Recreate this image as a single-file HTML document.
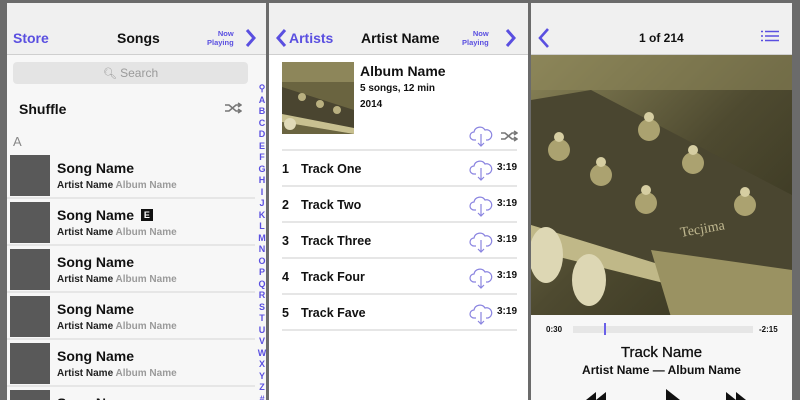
<!DOCTYPE html>
<html><head><meta charset="utf-8"><style>
*{margin:0;padding:0;box-sizing:border-box}
body{width:800px;height:400px;background:#6b6b6b;position:relative;overflow:hidden;font-family:"Liberation Sans",sans-serif;color:#111}
.p{position:absolute;top:3px;height:397px;background:#f7f7f7;overflow:hidden}
.nav{position:absolute;left:0;top:0;right:0;height:52px;background:#f0f0f0;border-bottom:1px solid #cfcfcf}
.a{position:absolute;font-weight:bold}
.blue{color:#5a4fe0}
.np{position:absolute;font-size:7.5px;font-weight:bold;color:#5a4fe0;text-align:right;line-height:9px}
.row{position:absolute;left:0;width:248px;height:47px;border-bottom:2px solid #e6e6e6}
.th{position:absolute;left:3px;top:3px;width:40px;height:41px;background:#595959}
.sn{position:absolute;left:50px;top:8px;font-size:14px;font-weight:bold;color:#111}
.sa{position:absolute;left:50px;top:28px;font-size:10px;font-weight:bold;color:#222}
.sa span{color:#9a9a9a}
.idx{position:absolute;left:249px;top:80px;width:12px;text-align:center;font-size:9px;font-weight:bold;color:#5a4fe0;line-height:11.5px}
.tr{position:absolute;left:13px;width:235px;height:36px;border-top:2px solid #e6e6e6;font-size:12.5px;font-weight:bold}
</style></head><body>
<div class="p" style="left:7px;width:259px">
 <div class="nav">
  <div class="a blue" style="left:6px;top:27px;font-size:14px">Store</div>
  <div class="a" style="left:110px;top:27px;font-size:14px">Songs</div>
  <div class="np" style="left:200px;top:26px">Now<br>Playing</div>
  <svg style="position:absolute;left:237px;top:25px" width="12" height="20"><path d="M3 2 L10 10 L3 18" stroke="#5a4fe0" stroke-width="3" fill="none"/></svg>
 </div>
 <div style="position:absolute;left:6px;top:59px;width:235px;height:22px;background:#e4e4e4;border-radius:4px;color:#9a9a9a;font-size:12px;text-align:center;line-height:22px"><span style="font-size:11px">&#x1F50D;&#xFE0E;</span> Search</div>
 <div class="a" style="left:12px;top:98px;font-size:14px">Shuffle</div>
 <svg style="position:absolute;left:217px;top:99px" width="18" height="12"><path d="M1 3h4l7 6h5M1 9h4l7-6h5M14 1l3 2-3 2M14 7l3 2-3 2" stroke="#777" stroke-width="1.6" fill="none"/></svg>
 <div style="position:absolute;left:6px;top:131px;font-size:13px;color:#888">A</div>
 <div class="row" style="top:149px"><div class="th"></div><div class="sn">Song Name</div><div class="sa">Artist Name <span>Album Name</span></div></div>
 <div class="row" style="top:196px"><div class="th"></div><div class="sn">Song Name <span style="display:inline-block;background:#111;color:#fff;font-size:9px;width:12px;height:12px;text-align:center;line-height:12px;vertical-align:2px;margin-left:3px">E</span></div><div class="sa">Artist Name <span>Album Name</span></div></div>
 <div class="row" style="top:243px"><div class="th"></div><div class="sn">Song Name</div><div class="sa">Artist Name <span>Album Name</span></div></div>
 <div class="row" style="top:290px"><div class="th"></div><div class="sn">Song Name</div><div class="sa">Artist Name <span>Album Name</span></div></div>
 <div class="row" style="top:337px"><div class="th"></div><div class="sn">Song Name</div><div class="sa">Artist Name <span>Album Name</span></div></div>
 <div class="row" style="top:384px"><div class="th"></div><div class="sn">Song Name</div></div>
 <div class="idx">&#9906;<br>A<br>B<br>C<br>D<br>E<br>F<br>G<br>H<br>I<br>J<br>K<br>L<br>M<br>N<br>O<br>P<br>Q<br>R<br>S<br>T<br>U<br>V<br>W<br>X<br>Y<br>Z<br>#</div>
</div>
<div class="p" style="left:269px;width:259px;background:#fff">
 <div class="nav">
  <svg style="position:absolute;left:6px;top:25px" width="12" height="20"><path d="M10 2 L3 10 L10 18" stroke="#5a4fe0" stroke-width="3" fill="none"/></svg>
  <div class="a blue" style="left:20px;top:27px;font-size:14px">Artists</div>
  <div class="a" style="left:92px;top:27px;font-size:14px">Artist Name</div>
  <div class="np" style="left:193px;top:26px">Now<br>Playing</div>
  <svg style="position:absolute;left:235px;top:25px" width="12" height="20"><path d="M3 2 L10 10 L3 18" stroke="#5a4fe0" stroke-width="3" fill="none"/></svg>
 </div>
 <svg style="position:absolute;left:13px;top:59px" width="72" height="72"><rect width="72" height="72" fill="#6a6440"/><rect y="0" width="72" height="20" fill="#8d865a"/><polygon points="0,25 72,48 72,72 0,60" fill="#4a4530"/><polygon points="0,60 72,72 72,66 0,52" fill="#c8c090"/><circle cx="20" cy="35" r="4" fill="#b9b080"/><circle cx="38" cy="42" r="4" fill="#b9b080"/><circle cx="55" cy="48" r="4" fill="#b9b080"/><circle cx="8" cy="62" r="6" fill="#e0dab8"/></svg>
 <div class="a" style="left:91px;top:60px;font-size:14px">Album Name</div>
 <div class="a" style="left:91px;top:80px;font-size:10px">5 songs, 12 min</div>
 <div class="a" style="left:91px;top:96px;font-size:10px">2014</div>
 <svg style="position:absolute;left:200px;top:121px" width="24" height="24"><path d="M7 16H5a4 4 0 0 1 0-8 6 6 0 0 1 11-2 5 5 0 0 1 3 10h-2M12 10v12M9 19l3 3 3-3" stroke="#8a84e0" stroke-width="1.2" fill="none"/></svg>
 <svg style="position:absolute;left:231px;top:127px" width="18" height="12"><path d="M1 3h4l7 6h5M1 9h4l7-6h5M14 1l3 2-3 2M14 7l3 2-3 2" stroke="#777" stroke-width="1.6" fill="none"/></svg>
 <div class="tr" style="top:146px"><span style="position:absolute;left:0;top:11px">1</span><span style="position:absolute;left:19px;top:11px">Track One</span></div>
 <div class="tr" style="top:182px"><span style="position:absolute;left:0;top:11px">2</span><span style="position:absolute;left:19px;top:11px">Track Two</span></div>
 <div class="tr" style="top:218px"><span style="position:absolute;left:0;top:11px">3</span><span style="position:absolute;left:19px;top:11px">Track Three</span></div>
 <div class="tr" style="top:254px"><span style="position:absolute;left:0;top:11px">4</span><span style="position:absolute;left:19px;top:11px">Track Four</span></div>
 <div class="tr" style="top:290px"><span style="position:absolute;left:0;top:11px">5</span><span style="position:absolute;left:19px;top:11px">Track Fave</span></div>
 <div class="tr" style="top:326px;height:2px"></div>
 <div style="position:absolute;left:200px;top:155px">
  <svg style="position:absolute;top:0" width="24" height="24"><path d="M7 16H5a4 4 0 0 1 0-8 6 6 0 0 1 11-2 5 5 0 0 1 3 10h-2M12 10v12M9 19l3 3 3-3" stroke="#8a84e0" stroke-width="1.2" fill="none"/></svg>
  <svg style="position:absolute;top:36px" width="24" height="24"><path d="M7 16H5a4 4 0 0 1 0-8 6 6 0 0 1 11-2 5 5 0 0 1 3 10h-2M12 10v12M9 19l3 3 3-3" stroke="#8a84e0" stroke-width="1.2" fill="none"/></svg>
  <svg style="position:absolute;top:72px" width="24" height="24"><path d="M7 16H5a4 4 0 0 1 0-8 6 6 0 0 1 11-2 5 5 0 0 1 3 10h-2M12 10v12M9 19l3 3 3-3" stroke="#8a84e0" stroke-width="1.2" fill="none"/></svg>
  <svg style="position:absolute;top:108px" width="24" height="24"><path d="M7 16H5a4 4 0 0 1 0-8 6 6 0 0 1 11-2 5 5 0 0 1 3 10h-2M12 10v12M9 19l3 3 3-3" stroke="#8a84e0" stroke-width="1.2" fill="none"/></svg>
  <svg style="position:absolute;top:144px" width="24" height="24"><path d="M7 16H5a4 4 0 0 1 0-8 6 6 0 0 1 11-2 5 5 0 0 1 3 10h-2M12 10v12M9 19l3 3 3-3" stroke="#8a84e0" stroke-width="1.2" fill="none"/></svg>
 </div>
 <div class="a" style="left:228px;top:147px;font-size:10px;line-height:36px">3:19<br>3:19<br>3:19<br>3:19<br>3:19</div>
</div>
<div class="p" style="left:531px;width:261px;background:#f7f7f7">
 <div class="nav">
  <svg style="position:absolute;left:6px;top:24px" width="14" height="22"><path d="M11 2 L3 11 L11 20" stroke="#5a4fe0" stroke-width="2.6" fill="none"/></svg>
  <div class="a" style="left:108px;top:28px;font-size:12px">1 of 214</div>
  <svg style="position:absolute;left:230px;top:27px" width="18" height="14"><path d="M0 1.5h2M4 1.5h14M0 6h2M4 6h14M0 10.5h2M4 10.5h14" stroke="#5a4fe0" stroke-width="1.4"/></svg>
 </div>
 <svg style="position:absolute;left:0;top:52px" width="261" height="260">
  <defs><linearGradient id="bg" x1="0" y1="0" x2="1" y2="1"><stop offset="0" stop-color="#8a8458"/><stop offset="0.5" stop-color="#4e4a30"/><stop offset="1" stop-color="#34321e"/></linearGradient></defs>
  <rect width="261" height="260" fill="url(#bg)"/>
  <rect x="0" y="0" width="261" height="35" fill="#8e875a" opacity="0.6"/>
  <polygon points="0,45 60,35 261,140 261,250 0,170" fill="#4a4630"/>
  <polygon points="0,170 261,250 261,260 0,195" fill="#c0b888"/>
  <polygon points="120,195 261,215 261,262 140,262" fill="#9a9262"/>
  <g fill="#aba270"><circle cx="28" cy="95" r="11"/><circle cx="70" cy="120" r="11"/><circle cx="115" cy="148" r="11"/><circle cx="118" cy="75" r="11"/><circle cx="162" cy="108" r="11"/><circle cx="214" cy="150" r="11"/></g>
  <g fill="#d6cea2"><circle cx="28" cy="82" r="5"/><circle cx="70" cy="107" r="5"/><circle cx="115" cy="135" r="5"/><circle cx="118" cy="62" r="5"/><circle cx="162" cy="95" r="5"/><circle cx="214" cy="137" r="5"/></g>
  <ellipse cx="15" cy="200" rx="17" ry="28" fill="#ddd7b4"/><ellipse cx="58" cy="225" rx="17" ry="26" fill="#ddd7b4"/>
  <text x="150" y="182" fill="#c0b890" font-size="14" font-family="Liberation Serif" transform="rotate(-10 150 182)">Tecjima</text>
 </svg>
 <div class="a" style="left:15px;top:322px;font-size:8px">0:30</div>
 <div style="position:absolute;left:42px;top:323px;width:180px;height:7px;background:#e6e6e6"></div>
 <div style="position:absolute;left:73px;top:320px;width:2px;height:12px;background:#6a60e8"></div>
 <div class="a" style="left:228px;top:322px;font-size:8px">-2:15</div>
 <div class="a" style="left:0;width:261px;text-align:center;top:341px;font-size:15px;font-weight:normal;-webkit-text-stroke:0.3px #111">Track Name</div>
 <div class="a" style="left:0;width:261px;text-align:center;top:360px;font-size:12px">Artist Name — Album Name</div>
 <svg style="position:absolute;left:45px;top:386px" width="180" height="11"><path d="M10 11l10-8v8zM20 11l10-8v8zM90 0l14 11H90zM150 11V3l10 8zM160 11V3l10 8z" fill="#111"/></svg>
</div>
</body></html>
